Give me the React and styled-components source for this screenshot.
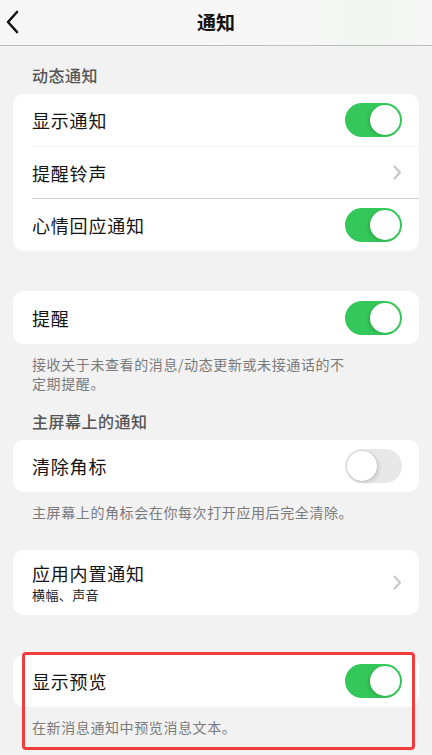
import React from "react";
import styled, { createGlobalStyle } from "styled-components";

const GlobalStyle = createGlobalStyle`
  html, body {
    margin: 0;
    padding: 0;
    background: #f2f2f2;
  }
  body {
    font-family: "Noto Sans CJK SC", "Noto Sans", sans-serif;
    -webkit-font-smoothing: antialiased;
  }
`;

const Page = styled.div`
  width: 432px;
  min-height: 755px;
  background: #f2f2f2;
  overflow: hidden;
`;

const Header = styled.div`
  height: 46px;
  box-sizing: border-box;
  display: flex;
  align-items: center;
  justify-content: center;
  position: relative;
  background: linear-gradient(90deg, #f6f6f6 0%, #f7f7f7 70%, #f1f7f1 85%, #f6f6f6 100%);
  border-bottom: 1px solid #bdbdbd;
`;

const BackButton = styled.div`
  position: absolute;
  left: 3px;
  top: 9px;
  width: 18px;
  height: 26px;
  display: flex;
  align-items: center;
  justify-content: center;
`;

const Title = styled.div`
  font-size: 19px;
  font-weight: 700;
  color: #111;
  line-height: 24px;
  margin-top: -2px;
`;

const Content = styled.div`
  padding: 19px 13px 0;
`;

const SectionTitle = styled.div`
  font-size: 16px;
  line-height: 20px;
  letter-spacing: 0.5px;
  color: #555;
  font-weight: 500;
  padding-left: 19px;
  margin-top: ${(p) => p.$top || 0}px;
  margin-bottom: 9px;
`;

const Card = styled.div`
  background: #fff;
  border-radius: 11px;
  overflow: hidden;
  margin-top: ${(p) => p.$top || 0}px;
`;

const Row = styled.div`
  height: ${(p) => p.$h || 52}px;
  box-sizing: border-box;
  display: flex;
  align-items: center;
  justify-content: space-between;
  margin-left: 19px;
  padding-right: 17px;
  border-top: ${(p) => (p.$divider ? `1px solid ${p.$divider}` : "none")};
`;

const LabelBlock = styled.div`
  display: flex;
  flex-direction: column;
`;

const Label = styled.div`
  font-size: 18px;
  line-height: 24px;
  letter-spacing: 0.8px;
  color: #141414;
`;

const SubLabel = styled.div`
  font-size: 13px;
  line-height: 18px;
  letter-spacing: 0.4px;
  color: #222;
  margin-top: 1px;
`;

const Footer = styled.div`
  font-size: 14px;
  line-height: 19px;
  color: #7a7a7a;
  padding: 11px 60px 0 19px;
  letter-spacing: 0.6px;
`;

const SwitchTrack = styled.div`
  width: 57px;
  height: 34px;
  border-radius: 17px;
  box-sizing: border-box;
  background: ${(p) => (p.$on ? "#34c759" : "#e8e8e9")};
  position: relative;
  flex-shrink: 0;
`;

const SwitchKnob = styled.div`
  position: absolute;
  top: 2px;
  left: ${(p) => (p.$on ? "25px" : "2px")};
  width: 30px;
  height: 30px;
  border-radius: 50%;
  background: #fff;
  box-shadow: ${(p) =>
    p.$on
      ? "-2px 1px 3px rgba(0,0,0,0.12)"
      : "0 0 0 1px rgba(0,0,0,0.06), 2px 2px 4px rgba(0,0,0,0.12)"};
`;

const PreviewWrap = styled.div`
  position: relative;
  margin-top: 40px;
`;

const Highlight = styled.div`
  position: absolute;
  left: 9px;
  top: -3px;
  width: 393px;
  height: 98px;
  box-sizing: border-box;
  border: 3px solid #f23b3d;
  border-radius: 4px;
  pointer-events: none;
`;

const Switch = ({ on }) => (
  <SwitchTrack $on={on}>
    <SwitchKnob $on={on} />
  </SwitchTrack>
);

const Chevron = () => (
  <svg width="9" height="15" viewBox="0 0 9 15">
    <path d="M1.5 1.5 L7 7.5 L1.5 13.5" fill="none" stroke="#c5c5c8" strokeWidth="2" strokeLinecap="round" strokeLinejoin="round" />
  </svg>
);

export default function App() {
  return (
    <Page>
      <GlobalStyle />
      <Header>
        <BackButton>
          <svg width="14" height="24" viewBox="0 0 14 24">
            <path d="M12 2 L3 12 L12 22" fill="none" stroke="#111" strokeWidth="2.6" strokeLinecap="round" strokeLinejoin="round" />
          </svg>
        </BackButton>
        <Title>通知</Title>
      </Header>
      <Content>
        <SectionTitle>动态通知</SectionTitle>
        <Card>
          <Row $h={52}>
            <Label>显示通知</Label>
            <Switch on />
          </Row>
          <Row $h={52} $divider="#f1f1f1">
            <Label>提醒铃声</Label>
            <Chevron />
          </Row>
          <Row $h={53} $divider="#cfcfcf">
            <Label>心情回应通知</Label>
            <Switch on />
          </Row>
        </Card>

        <Card $top={40}>
          <Row $h={53}>
            <Label>提醒</Label>
            <Switch on />
          </Row>
        </Card>
        <Footer>接收关于未查看的消息/动态更新或未接通话的不定期提醒。</Footer>

        <SectionTitle $top={18}>主屏幕上的通知</SectionTitle>
        <Card>
          <Row $h={52}>
            <Label>清除角标</Label>
            <Switch />
          </Row>
        </Card>
        <Footer>主屏幕上的角标会在你每次打开应用后完全清除。</Footer>

        <Card $top={28}>
          <Row $h={65}>
            <LabelBlock>
              <Label>应用内置通知</Label>
              <SubLabel>横幅、声音</SubLabel>
            </LabelBlock>
            <Chevron />
          </Row>
        </Card>

        <PreviewWrap>
          <Card>
            <Row $h={52}>
              <Label>显示预览</Label>
              <Switch on />
            </Row>
          </Card>
          <Footer>在新消息通知中预览消息文本。</Footer>
          <Highlight />
        </PreviewWrap>
      </Content>
    </Page>
  );
}
